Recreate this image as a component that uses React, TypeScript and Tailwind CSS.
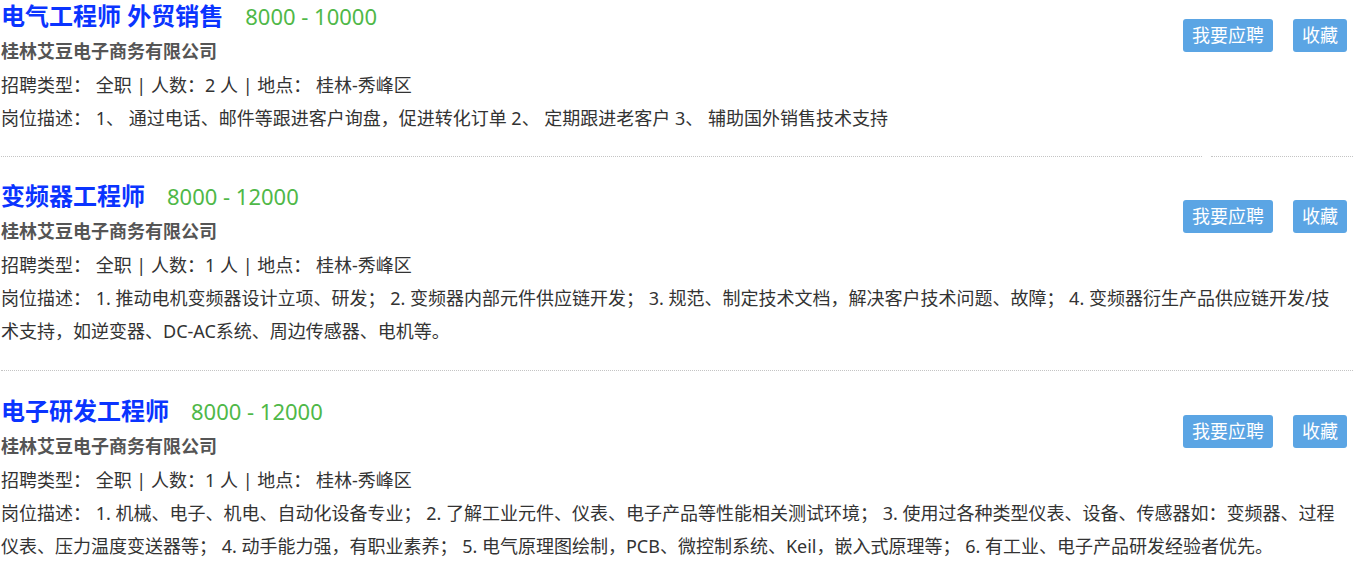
import React from "react";

type Job = {
  title: string;
  salary: string;
  count: string;
  desc: string[];
  wrap: string;
  btn: string;
  splitLine?: boolean;
};

const jobs: Job[] = [
  {
    title: "电气工程师 外贸销售",
    salary: "8000 - 10000",
    count: "2",
    desc: [
      "岗位描述： 1、 通过电话、邮件等跟进客户询盘，促进转化订单 2、 定期跟进老客户 3、 辅助国外销售技术支持",
    ],
    wrap: "pb-[21px]",
    btn: "mt-[19px]",
    splitLine: true,
  },
  {
    title: "变频器工程师",
    salary: "8000 - 12000",
    count: "1",
    desc: [
      "岗位描述： 1. 推动电机变频器设计立项、研发； 2. 变频器内部元件供应链开发； 3. 规范、制定技术文档，解决客户技术问题、故障； 4. 变频器衍生产品供应链开发/技",
      "术支持，如逆变器、DC-AC系统、周边传感器、电机等。",
    ],
    wrap: "pt-[23px] pb-[22px]",
    btn: "mt-[20px]",
  },
  {
    title: "电子研发工程师",
    salary: "8000 - 12000",
    count: "1",
    desc: [
      "岗位描述： 1. 机械、电子、机电、自动化设备专业； 2. 了解工业元件、仪表、电子产品等性能相关测试环境； 3. 使用过各种类型仪表、设备、传感器如：变频器、过程",
      "仪表、压力温度变送器等； 4. 动手能力强，有职业素养； 5. 电气原理图绘制，PCB、微控制系统、Keil，嵌入式原理等； 6. 有工业、电子产品研发经验者优先。",
    ],
    wrap: "pt-[24px]",
    btn: "mt-[20px]",
  },
];

function JobItem({ job, last }: { job: Job; last: boolean }) {
  return (
    <div>
      <div className={job.wrap}>
        <div className={`float-right ${job.btn} mr-[6px] flex gap-[20px]`}>
          <button className="h-[33px] px-[9px] rounded-[3px] bg-[#5ba5e4] text-white text-[18px] leading-[33px]">
            我要应聘
          </button>
          <button className="h-[33px] px-[9px] rounded-[3px] bg-[#5ba5e4] text-white text-[18px] leading-[33px]">
            收藏
          </button>
        </div>
        <div className="flex items-center h-[32px] gap-[22px]">
          <span className="text-[24px] font-bold text-[#0a34ff] leading-[32px]">{job.title}</span>
          <span className="text-[22px] text-[#4fb848] leading-[32px]">{job.salary}</span>
        </div>
        <div className="mt-[3px] text-[18px] font-bold text-[#555555] leading-[33px]">
          桂林艾豆电子商务有限公司
        </div>
        <div className="pt-[1px] text-[18px] text-[#333333] leading-[33px]">
          招聘类型： 全职 | 人数：{job.count} 人 | 地点： 桂林-秀峰区
        </div>
        <div className="text-[18px] text-[#333333] leading-[33px]">
          {job.desc.map((l, i) => (
            <div key={i} className="whitespace-nowrap">
              {l}
            </div>
          ))}
        </div>
      </div>
      {!last &&
        (job.splitLine ? (
          <div className="flex">
            <div className="w-[1201px] border-b border-dotted border-[#c4c4c4]" />
            <div className="flex-1 ml-[9px] border-b border-dotted border-[#c4c4c4]" />
          </div>
        ) : (
          <div className="border-b border-dotted border-[#c4c4c4]" />
        ))}
    </div>
  );
}

export default function App() {
  return (
    <div
      className="w-[1353px] h-[563px] overflow-hidden bg-white pl-[1px]"
      style={{ fontFamily: '"Noto Sans", "Noto Sans CJK SC", sans-serif' }}
    >
      {jobs.map((j, i) => (
        <JobItem key={i} job={j} last={i === jobs.length - 1} />
      ))}
    </div>
  );
}
